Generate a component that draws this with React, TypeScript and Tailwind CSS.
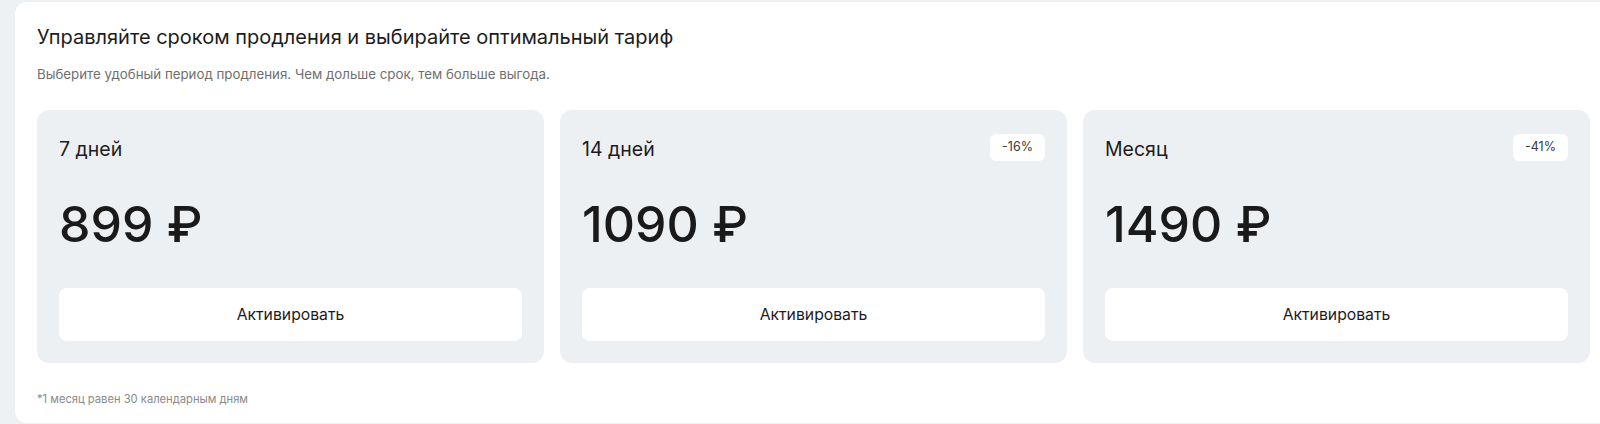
import React from 'react';

type Plan = {
  title: string;
  price: string;
  discount?: string;
};

const plans: Plan[] = [
  { title: '7 дней', price: '899 ₽' },
  { title: '14 дней', price: '1090 ₽', discount: '-16%' },
  { title: 'Месяц', price: '1490 ₽', discount: '-41%' },
];

function PlanCard({ plan }: { plan: Plan }) {
  return (
    <div className="flex flex-col rounded-[12px] bg-[#edf0f3] px-[22px] pt-[22px] pb-[22px]">
      <div className="flex h-[30px] items-center justify-between">
        <span className="mt-[4px] text-[19.5px] leading-[28px] text-[#1c1c1c]">{plan.title}</span>
        {plan.discount && (
          <span className="flex h-[27px] w-[55px] items-center justify-center rounded-[6px] bg-white text-[12.5px] text-[#3a3a3a]">
            {plan.discount}
          </span>
        )}
      </div>
      <div className="mt-[37px] h-[50px] text-[50px] leading-none font-medium text-[#1a1a1a]">
        {plan.price}
      </div>
      <button className="mt-[39px] flex h-[53px] w-full items-center justify-center rounded-[8px] bg-white text-[15.75px] text-[#1c1c1c]">
        Активировать
      </button>
    </div>
  );
}

export default function App() {
  return (
    <div
      className="h-[424px] w-[1600px] overflow-hidden bg-[#eef1f4] pt-[2px] pl-[15px]"
      style={{ fontFamily: 'Inter, "Noto Sans", sans-serif' }}
    >
      <div className="h-[421px] w-[1597px] rounded-[12px] bg-white px-[22px] pt-[21px]">
        <h1 className="text-[20px] leading-[28px] font-normal text-[#1c1c1c]">
          Управляйте сроком продления и выбирайте оптимальный тариф
        </h1>
        <p className="mt-[13px] text-[13.3px] leading-[20px] text-[#6f6f6f]">
          Выберите удобный период продления. Чем дольше срок, тем больше выгода.
        </p>
        <div className="mt-[26px] grid grid-cols-3 gap-4">
          {plans.map((p) => (
            <PlanCard key={p.title} plan={p} />
          ))}
        </div>
        <p className="mt-[28px] text-[11.2px] leading-[16px] text-[#8a8a8a]">
          *1 месяц равен 30 календарным дням
        </p>
      </div>
    </div>
  );
}
